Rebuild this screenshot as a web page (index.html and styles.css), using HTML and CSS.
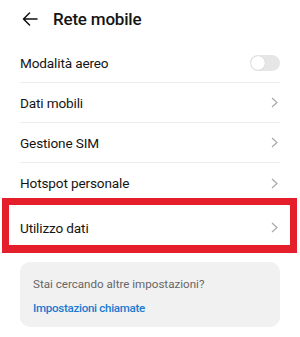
FILE: index.html
```html
<!DOCTYPE html>
<html lang="it">
<head>
<meta charset="utf-8">
<link rel="stylesheet" href="styles.css">
</head>
<body>
<div class="screen">
  <header class="header">
    <svg class="back" width="16" height="14" viewBox="0 0 16 14"><path d="M15 7H1.5M7.5 1L1.5 7l6 6" fill="none" stroke="#111" stroke-width="1.5" stroke-linecap="round" stroke-linejoin="round"/></svg>
    <h1 class="title">Rete mobile</h1>
  </header>
  <div class="list">
    <div class="row divided"><span class="label">Modalità aereo</span><span class="toggle"><span class="knob"></span></span></div>
    <div class="row divided"><span class="label">Dati mobili</span><svg class="chev" width="7" height="11" viewBox="0 0 7 11"><path d="M1 1l5 4.5L1 10" fill="none" stroke="#a8a8a8" stroke-width="1.2"/></svg></div>
    <div class="row divided"><span class="label">Gestione SIM</span><svg class="chev" width="7" height="11" viewBox="0 0 7 11"><path d="M1 1l5 4.5L1 10" fill="none" stroke="#a8a8a8" stroke-width="1.2"/></svg></div>
    <div class="row"><span class="label">Hotspot personale</span><svg class="chev" width="7" height="11" viewBox="0 0 7 11"><path d="M1 1l5 4.5L1 10" fill="none" stroke="#a8a8a8" stroke-width="1.2"/></svg></div>
  </div>
  <div class="highlight">
    <div class="row hl-row"><span class="label">Utilizzo dati</span><svg class="chev" width="7" height="11" viewBox="0 0 7 11"><path d="M1 1l5 4.5L1 10" fill="none" stroke="#a8a8a8" stroke-width="1.2"/></svg></div>
  </div>
  <div class="card">
    <p class="card-q">Stai cercando altre impostazioni?</p>
    <p class="card-link">Impostazioni chiamate</p>
  </div>
</div>
</body>
</html>
```
FILE: styles.css
```css
html, body {
  margin: 0;
  padding: 0;
  background: #fff;
}
.screen {
  width: 300px;
  height: 337px;
  overflow: hidden;
  font-family: Roboto, "Liberation Sans", sans-serif;
  color: #151515;
}
.header {
  display: flex;
  align-items: center;
  height: 37px;
  padding-left: 22px;
  gap: 15px;
}
.back {
  display: block;
}
.title {
  margin: 0;
  font-size: 17px;
  font-weight: 500;
  letter-spacing: -0.2px;
}
.list {
  padding: 6px 20px 0;
}
.row {
  display: flex;
  align-items: center;
  justify-content: space-between;
  height: 40px;
}
.divided {
  border-bottom: 1px solid #ededed;
  height: 39px;
}
.label {
  font-size: 13.6px;
  letter-spacing: -0.15px;
}
.chev {
  display: block;
  margin-right: 2px;
}
.toggle {
  position: relative;
  width: 30px;
  height: 16px;
  border-radius: 8px;
  background: #e6e6e6;
}
.knob {
  position: absolute;
  left: 1px;
  top: 1px;
  width: 14px;
  height: 14px;
  border-radius: 50%;
  background: #fff;
  box-shadow: 0 0 1px rgba(0,0,0,0.25);
}
.highlight {
  margin: -5px 3px 0 2px;
  border: 7px solid #e41f2b;
  border-bottom-width: 8px;
}
.hl-row {
  padding: 5px 10px 0 11px;
  box-sizing: border-box;
  height: 40px;
}
.card {
  margin: 9px 20px 0;
  background: #f1f1f1;
  border-radius: 10px;
  padding: 14px 13px 12px;
  height: 65px;
  box-sizing: border-box;
}
.card-q {
  margin: 0;
  font-size: 11.6px;
  color: #666;
  line-height: 16px;
}
.card-link {
  margin: 8px 0 0;
  font-size: 11.6px;
  font-weight: 500;
  color: #1a7ad0;
  line-height: 16px;
  letter-spacing: -0.3px;
}
```
